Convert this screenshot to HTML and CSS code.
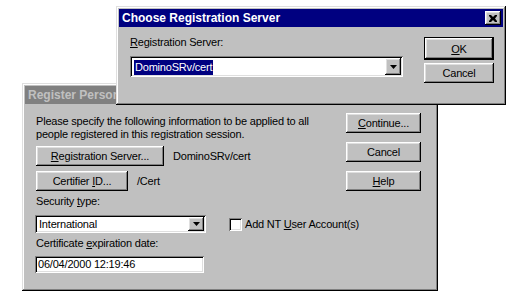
FILE: index.html
```html
<!DOCTYPE html>
<html lang="en">
<head>
  <meta charset="UTF-8">
  <title>Choose Registration Server</title>
  <link rel="stylesheet" href="styles.css">
</head>
<body>
  <!-- Register Person dialog (inactive, behind) -->
  <div class="window register">
    <div class="titlebar">
      <span class="title">Register Person</span>
    </div>
    <div class="body">
      <div class="form">
        <p class="intro">Please specify the following information to be applied to all<br>people registered in this registration session.</p>
        <div class="row">
          <button class="btn btn-server"><u>R</u>egistration Server...</button>
          <span class="value">DominoSRv/cert</span>
        </div>
        <div class="row">
          <button class="btn btn-cert">Certifier <u>I</u>D...</button>
          <span class="value">/Cert</span>
        </div>
        <p class="label">Security <u>t</u>ype:</p>
        <div class="row">
          <div class="field combo combo-security">
            <span class="combo-text">International</span>
            <span class="drop"><svg width="7" height="4" viewBox="0 0 7 4"><polygon points="0,0 7,0 3.5,4" fill="#000"/></svg></span>
          </div>
          <label class="check-row">
            <span class="check"></span>
            <span class="check-text">Add NT <u>U</u>ser Account(s)</span>
          </label>
        </div>
        <p class="label">Certificate <u>e</u>xpiration date:</p>
        <div class="field input-date">06/04/2000 12:19:46</div>
      </div>
      <div class="actions">
        <button class="btn"><u>C</u>ontinue...</button>
        <button class="btn">Cancel</button>
        <button class="btn"><u>H</u>elp</button>
      </div>
    </div>
  </div>

  <!-- Choose Registration Server dialog (active, in front) -->
  <div class="window choose">
    <div class="titlebar">
      <span class="title">Choose Registration Server</span>
      <span class="close">
        <svg width="8" height="7" viewBox="0 0 8 7"><path d="M0 0h2l2 2 2-2h2v1L6 3.5 8 6v1H6L4 5 2 7H0V6l2-2.5L0 1z" fill="#000"/></svg>
      </span>
    </div>
    <div class="body">
      <div class="form">
        <p class="label"><u>R</u>egistration Server:</p>
        <div class="field combo combo-server">
          <span class="combo-text"><span class="selected">DominoSRv/cert</span></span>
          <span class="drop"><svg width="7" height="4" viewBox="0 0 7 4"><polygon points="0,0 7,0 3.5,4" fill="#000"/></svg></span>
        </div>
      </div>
      <div class="actions">
        <button class="btn btn-default"><u>O</u>K</button>
        <button class="btn btn-cancel">Cancel</button>
      </div>
    </div>
  </div>
</body>
</html>
```

FILE: styles.css
```css
/* Reset */
* {
  margin: 0;
  padding: 0;
  box-sizing: border-box;
}
body {
  width: 509px;
  height: 294px;
  background: #fff;
  font-family: "Liberation Sans", Arial, sans-serif;
  font-size: 11px;
  letter-spacing: -0.2px;
  color: #000;
  position: relative;
  overflow: hidden;
}
u {
  text-decoration: underline;
  text-underline-offset: 1px;
}
/* Window frame */
.window {
  position: absolute;
  display: flex;
  flex-direction: column;
  padding: 3px;
  background: #c0c0c0;
  box-shadow: inset -1px -1px #000, inset 1px 1px #dfdfdf, inset -2px -2px #808080, inset 2px 2px #fff;
}
.window.register {
  left: 22px;
  top: 83px;
  width: 416px;
  height: 208px;
}
.window.choose {
  left: 116px;
  top: 6px;
  width: 390px;
  height: 99px;
}
.titlebar {
  height: 18px;
  display: flex;
  align-items: center;
  justify-content: space-between;
  padding: 0 2px 0 3px;
  background: #000080;
  color: #fff;
  font-weight: bold;
  font-size: 12px;
  letter-spacing: 0;
}
.register .titlebar {
  background: #808080;
  color: #c0c0c0;
}
.close {
  width: 16px;
  height: 14px;
  display: flex;
  align-items: center;
  justify-content: center;
  background: #c0c0c0;
  box-shadow: inset -1px -1px #000, inset 1px 1px #fff, inset -2px -2px #808080, inset 2px 2px #dfdfdf;
}
/* Dialog body */
.body {
  display: flex;
  align-items: flex-start;
}
.register .body {
  padding: 9px 14px 0 11px;
}
.choose .body {
  padding: 0 9px 0 11px;
}
.form {
  flex: 1;
  min-width: 0;
  display: flex;
  flex-direction: column;
  align-items: flex-start;
}
.intro {
  line-height: 13px;
  margin-top: 2px;
}
.label {
  line-height: 13px;
  margin-top: 7px;
}
.row {
  display: flex;
  align-items: center;
  margin-top: 5px;
}
.value {
  margin-left: 9px;
}
.register .label + .row {
  margin-top: 7px;
}
.register .row + .label {
  margin-top: 4px;
}
/* Buttons */
.btn {
  height: 20px;
  padding: 0;
  border: none;
  background: #c0c0c0;
  font: inherit;
  letter-spacing: inherit;
  color: #000;
  text-align: center;
  white-space: nowrap;
  box-shadow: inset -1px -1px #000, inset 1px 1px #fff, inset -2px -2px #808080, inset 2px 2px #dfdfdf;
}
.btn-server {
  width: 128px;
}
.btn-cert {
  width: 92px;
}
.btn-default {
  height: 23px;
  box-shadow: inset 0 0 0 1px #000, inset -2px -2px #000, inset 2px 2px #fff, inset -3px -3px #808080, inset 3px 3px #dfdfdf;
}
.actions {
  flex-shrink: 0;
  display: flex;
  flex-direction: column;
}
.register .actions {
  width: 75px;
  gap: 9px;
}
.choose .actions {
  width: 70px;
  margin-top: 10px;
  gap: 3px;
}
/* Sunken fields */
.field {
  background: #fff;
  box-shadow: inset 1px 1px #808080, inset -1px -1px #fff, inset 2px 2px #000, inset -2px -2px #dfdfdf;
}
.combo {
  display: flex;
  align-items: center;
  padding: 2px;
}
.combo-text {
  flex: 1;
  padding-left: 2px;
}
.drop {
  width: 16px;
  align-self: stretch;
  display: flex;
  align-items: center;
  justify-content: center;
  background: #c0c0c0;
  box-shadow: inset -1px -1px #000, inset 1px 1px #fff, inset -2px -2px #808080, inset 2px 2px #dfdfdf;
}
.combo-security {
  width: 171px;
  height: 18px;
  flex-shrink: 0;
  margin-left: -1px;
}
.combo-server {
  width: 273px;
  height: 21px;
  margin-top: 7px;
}
.selected {
  background: #000080;
  color: #fff;
  padding: 1px 1px 2px;
}
.choose .label {
  margin-top: 9px;
}
.input-date {
  width: 169px;
  height: 17px;
  margin-top: 6px;
  margin-left: -1px;
  padding: 2px 3px;
  line-height: 13px;
}
/* Checkbox */
.check-row {
  display: flex;
  align-items: center;
  gap: 3px;
  margin-left: 23px;
}
.check {
  width: 13px;
  height: 13px;
  flex-shrink: 0;
  background: #fff;
  box-shadow: inset 1px 1px #808080, inset -1px -1px #fff, inset 2px 2px #000, inset -2px -2px #dfdfdf;
}
.check-text {
  white-space: nowrap;
}
```
